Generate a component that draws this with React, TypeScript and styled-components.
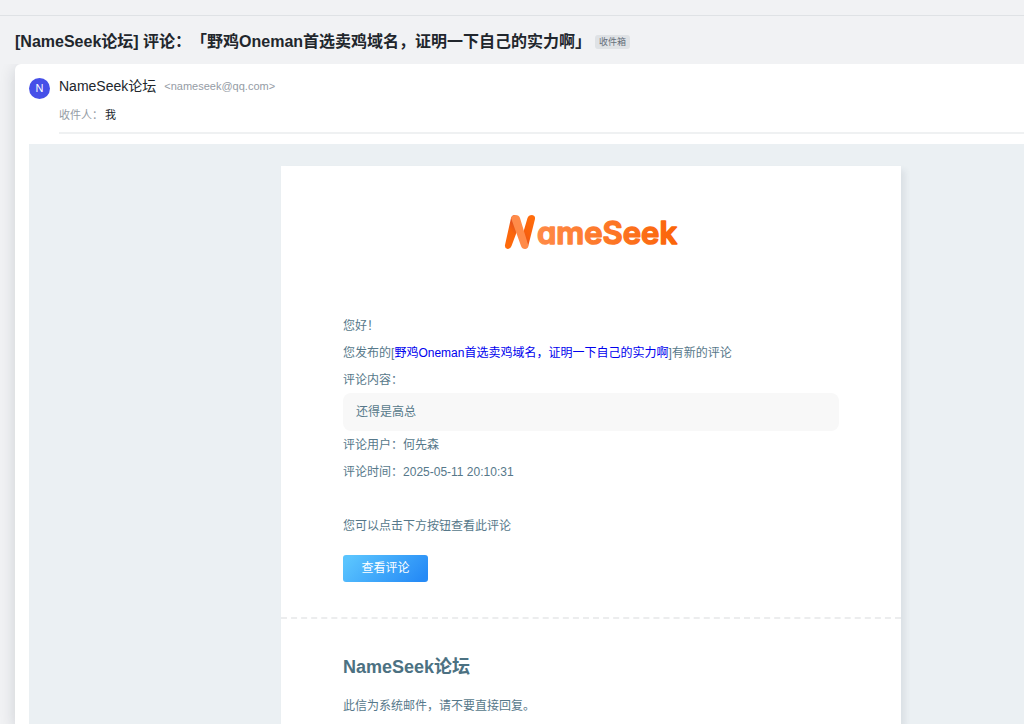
import React from "react";
import styled, { createGlobalStyle } from "styled-components";

const GlobalStyle = createGlobalStyle`
  *, *::before, *::after { box-sizing: border-box; }
  body {
    margin: 0;
    background: #f1f2f4;
    color: #21262c;
    font-family: "Liberation Sans", "Noto Sans CJK SC", sans-serif;
    overflow-x: hidden;
  }
`;

const Page = styled.div`
  display: flex;
  flex-direction: column;
  min-height: 100vh;
`;

const TopStrip = styled.div`
  height: 16px;
  border-bottom: 1px solid #dfe2e5;
`;

const SubjectBar = styled.header`
  display: flex;
  align-items: center;
  gap: 4px;
  height: 48px;
  padding: 4px 15px 0;
`;

const Subject = styled.h1`
  margin: 0;
  font-size: 16px;
  line-height: 24px;
  font-weight: 700;
  white-space: nowrap;
  text-spacing-trim: space-all;
`;

const FolderTag = styled.span`
  padding: 0 4px;
  border-radius: 3px;
  background: #dfe2e5;
  color: #66707b;
  font-size: 9px;
  line-height: 14px;
  white-space: nowrap;
`;

const MailPanel = styled.main`
  display: flex;
  flex-direction: column;
  flex: 1;
  margin-left: 15px;
  padding-left: 14px;
  border-radius: 6px 0 0 0;
  background: #fff;
  box-shadow: 0 4px 16px rgba(20, 30, 50, 0.16);
  clip-path: inset(0 0 0 -15px);
`;

const SenderRow = styled.section`
  display: flex;
  gap: 9px;
  padding-top: 12px;
`;

const Avatar = styled.div`
  flex: none;
  width: 21px;
  height: 21px;
  margin-top: 2px;
  border-radius: 50%;
  background: #4650e8;
  color: #fff;
  font-size: 11px;
  line-height: 21px;
  text-align: center;
`;

const SenderInfo = styled.div`
  flex: 1;
  height: 58px;
  border-bottom: 2px solid #eff1f2;
`;

const SenderLine = styled.div`
  display: flex;
  align-items: center;
  gap: 8px;
  height: 20px;
`;

const SenderName = styled.span`
  font-size: 14px;
  line-height: 20px;
`;

const Muted = styled.span`
  color: #959ca5;
  font-size: 11px;
  line-height: 16px;
`;

const RecipientLine = styled.div`
  display: flex;
  gap: 2px;
  margin-top: 11px;
  font-size: 11px;
  line-height: 16px;
`;

const MessageBody = styled.div`
  display: grid;
  grid-template-columns: 41fr minmax(0, 620px) 20fr;
  flex: 1;
  margin-top: 10px;
  padding-top: 22px;
  background: #ebf0f3;
`;

const Letter = styled.article`
  grid-column: 2;
  background: #fff;
  color: #56788a;
  font-size: 12px;
  line-height: 25px;
  box-shadow: 4px 4px 6px rgba(60, 70, 90, 0.09);
`;

const LogoRow = styled.div`
  display: flex;
  justify-content: center;
  padding: 48px 0 54px;
  svg { display: block; }
`;

const Content = styled.div`
  padding: 0 62px 35px;
`;

const Line = styled.p`
  margin: 0;
  min-height: 27px;
  padding-top: 2px;
`;

const TopicLink = styled.a`
  color: #00e;
  text-decoration: none;
`;

const Quote = styled.blockquote`
  margin: 0;
  padding: 7px 13px 6px;
  border-radius: 8px;
  background: #f8f8f8;
`;

const ViewButton = styled.button`
  display: block;
  width: 85px;
  height: 27px;
  margin-top: 16px;
  padding: 0 0 2px;
  border: 0;
  border-radius: 3px;
  background: linear-gradient(135deg, #5ac4fe 8%, #268bf6 92%);
  color: #fff;
  font: inherit;
  line-height: 24px;
  cursor: pointer;
`;

const LetterFooter = styled.footer`
  padding: 35px 62px 0;
  border-top: 2px dashed #ecedee;
`;

const ForumName = styled.h2`
  margin: 0 0 11px;
  color: #4c7182;
  font-size: 18px;
  line-height: 27px;
  font-weight: 700;
`;

function Logo() {
  return (
    <svg width="178" height="44" viewBox="0 0 178 44" role="img" aria-label="NameSeek">
      <defs>
        <linearGradient id="word" x1="0" y1="0" x2="1" y2="0">
          <stop offset="0" stopColor="#ff8a47" />
          <stop offset="1" stopColor="#fb6408" />
        </linearGradient>
        <linearGradient id="left" x1="0" y1="1" x2="0.4" y2="0">
          <stop offset="0" stopColor="#ff6c0c" />
          <stop offset="0.6" stopColor="#fa650c" />
          <stop offset="1" stopColor="#d84a28" />
        </linearGradient>
        <linearGradient id="right" x1="0" y1="1" x2="0.5" y2="0">
          <stop offset="0" stopColor="#d84a28" />
          <stop offset="0.5" stopColor="#f8600c" />
          <stop offset="1" stopColor="#ff6c0c" />
        </linearGradient>
      </defs>
      <path d="M9 4Q10 1 13 1L17 12L9.500 32Q8.500 35 5.500 35Q2.500 34.500 3 31Z" fill="url(#left)" />
      <path d="M23 32L20.500 21L25.500 4Q26.500 1 30 1Q33.500 1.500 33 5L26.500 31Q25.500 34.500 23 34.500Z" fill="url(#right)" />
      <path d="M9 4Q10 1 13.500 1Q17 1 18 4L26.500 32Q25.500 35 23 35Q20 35 19 32Z" fill="#ff8b49" />
      <text
        x="35"
        y="30"
        fill="url(#word)"
        stroke="url(#word)"
        strokeWidth="1.500"
        strokeLinejoin="round"
        fontFamily="Inter, sans-serif"
        fontSize="31"
        fontWeight="600"
        style={{ fontFeatureSettings: '"cv11"' }}
      >
        ameSeek
      </text>
    </svg>
  );
}

export default function App() {
  return (
    <>
      <GlobalStyle />
      <Page>
        <TopStrip />
        <SubjectBar>
          <Subject lang="zh-CN">[NameSeek论坛] 评论：「野鸡Oneman首选卖鸡域名，证明一下自己的实力啊」</Subject>
          <FolderTag>收件箱</FolderTag>
        </SubjectBar>
        <MailPanel lang="zh-CN">
          <SenderRow>
            <Avatar>N</Avatar>
            <SenderInfo>
              <SenderLine>
                <SenderName>NameSeek论坛</SenderName>
                <Muted>&lt;nameseek@qq.com&gt;</Muted>
              </SenderLine>
              <RecipientLine>
                <Muted>收件人：</Muted>
                <span>我</span>
              </RecipientLine>
            </SenderInfo>
          </SenderRow>
          <MessageBody>
            <Letter>
              <LogoRow>
                <Logo />
              </LogoRow>
              <Content>
                <Line>您好！</Line>
                <Line>
                  您发布的[
                  <TopicLink href="#topic">野鸡Oneman首选卖鸡域名，证明一下自己的实力啊</TopicLink>
                  ]有新的评论
                </Line>
                <Line>评论内容：</Line>
                <Quote>还得是高总</Quote>
                <Line>评论用户：何先森</Line>
                <Line>评论时间：2025-05-11 20:10:31</Line>
                <Line />
                <Line>您可以点击下方按钮查看此评论</Line>
                <ViewButton type="button">查看评论</ViewButton>
              </Content>
              <LetterFooter>
                <ForumName>NameSeek论坛</ForumName>
                <Line>此信为系统邮件，请不要直接回复。</Line>
              </LetterFooter>
            </Letter>
          </MessageBody>
        </MailPanel>
      </Page>
    </>
  );
}
